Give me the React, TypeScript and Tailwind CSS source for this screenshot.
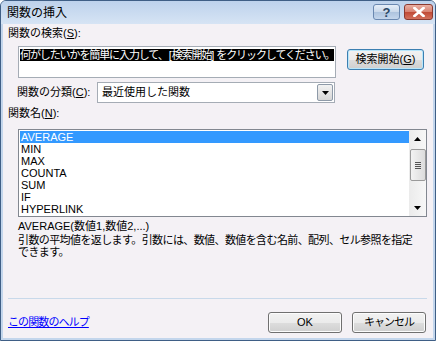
const items = ["AVERAGE", "MIN", "MAX", "COUNTA", "SUM", "IF", "HYPERLINK"];

const font = { fontFamily: '"Liberation Sans", "Noto Sans CJK JP", sans-serif' };

const Triangle = ({ up = false }: { up?: boolean }) => (
  <svg width="7" height="4" viewBox="0 0 7 4">
    <path d={up ? "M0 4 L3.5 0 L7 4 Z" : "M0 0 L7 0 L3.5 4 Z"} fill="#000" />
  </svg>
);

const WinButton = ({
  children,
  primary = false,
  className = "",
}: {
  children: React.ReactNode;
  primary?: boolean;
  className?: string;
}) => (
  <div
    className={`flex items-center justify-center rounded-[3px] border text-[11px] text-black ${
      primary
        ? "border-[#3c7fb1] shadow-[inset_0_0_0_1px_#b7e6fb]"
        : "border-[#707070] shadow-[inset_0_0_0_1px_#fcfcfc]"
    } bg-[linear-gradient(to_bottom,#f2f2f2_0%,#ebebeb_50%,#dddddd_51%,#cfcfcf_100%)] ${className}`}
  >
    {children}
  </div>
);

export default function App() {
  return (
    <div
      className="w-[436px] h-[341px] flex flex-col border border-[#3f5f86] rounded-t-[6px] overflow-hidden bg-[#c3d6ec]"
      style={font}
    >
      {/* title bar */}
      <div className="h-[23px] flex items-start bg-[linear-gradient(to_bottom,#bdd2ec,#d6e4f4)] pl-[6px] pr-[2px]">
        <span className="mt-[5px] text-[12px] leading-[14px] text-black">関数の挿入</span>
        <div className="ml-auto mt-[3px] flex gap-[4px]">
          <div className="w-[27px] h-[16px] rounded-[3px] border border-[#6a88b0] bg-[linear-gradient(to_bottom,#e6eef8_0%,#c9d8ea_50%,#adc3de_51%,#c4d6ec_100%)] flex items-center justify-center text-[13px] font-bold leading-none text-[#2c4766]">
            ?
          </div>
          <div className="w-[29px] h-[16px] rounded-[3px] border border-[#8b3a30] bg-[linear-gradient(to_bottom,#eab0a4_0%,#d7806f_50%,#c04a36_51%,#d2705c_100%)] flex items-center justify-center">
            <svg width="12" height="10" viewBox="0 0 12 10">
              <path d="M1.5 1 L10.5 9 M10.5 1 L1.5 9" stroke="#fff" strokeWidth="2.6" strokeLinecap="square" />
            </svg>
          </div>
        </div>
      </div>

      {/* body */}
      <div className="flex-1 flex flex-col mx-[2px] mb-[2px] bg-[#f4f1f5] text-[11px] leading-[13px] text-black">
        <div className="mt-[3px] ml-[5px]">
          関数の検索(<span className="underline">S</span>):
        </div>

        <div className="flex items-start mt-[6px]">
          <div className="ml-[15px] w-[318px] h-[32px] border border-[#a5acb5] bg-white px-[1px] pt-[2px]">
            <span className="bg-black text-white tracking-[-1.1px] whitespace-nowrap">
              何がしたいかを簡単に入力して、<span className="tracking-normal pl-[1px]">[</span>検索開始
              <span className="tracking-normal">]</span> をクリックしてください。
            </span>
          </div>
          <WinButton primary className="ml-[11px] mt-[3px] w-[77px] h-[21px]">
            検索開始(<span className="underline">G</span>)
          </WinButton>
        </div>

        <div className="flex items-center mt-[4px]">
          <span className="ml-[14px] w-[80px]">
            関数の分類(<span className="underline">C</span>):
          </span>
          <div className="w-[238px] h-[21px] border border-[#a5acb5] bg-white flex items-center">
            <span className="ml-[4px]">最近使用した関数</span>
            <div className="ml-auto mr-[1px] w-[16px] h-[17px] rounded-[2px] border border-[#8e9aa8] bg-[linear-gradient(to_bottom,#f2f2f2,#d6d6d6)] flex items-center justify-center">
              <Triangle />
            </div>
          </div>
        </div>

        <div className="mt-[4px] ml-[5px]">
          関数名(<span className="underline">N</span>):
        </div>

        <div className="mt-[9px] ml-[15px] w-[409px] h-[88px] border border-[#828790] bg-white flex">
          <div className="flex-1 pt-[1px] pl-[1px]">
            {items.map((it, i) => (
              <div
                key={it}
                className={`h-[12px] leading-[12px] pl-[1px] ${i === 0 ? "bg-[#3399ff] text-white" : ""}`}
              >
                {it}
              </div>
            ))}
          </div>
          <div className="w-[17px] flex flex-col items-center bg-[linear-gradient(to_right,#ebebeb,#f7f7f7)]">
            <div className="h-[17px] flex items-center justify-center">
              <Triangle up />
            </div>
            <div className="mt-[2px] w-[16px] h-[32px] rounded-[2px] border border-[#9a9a9a] bg-[linear-gradient(to_right,#f3f3f3,#dcdcdc)] flex flex-col items-center justify-center gap-[1px]">
              <div className="w-[6px] h-[1px] bg-[#555]" />
              <div className="w-[6px] h-[1px] bg-[#555]" />
              <div className="w-[6px] h-[1px] bg-[#555]" />
              <div className="w-[6px] h-[1px] bg-[#555]" />
            </div>
            <div className="mt-auto h-[17px] flex items-center justify-center">
              <Triangle />
            </div>
          </div>
        </div>

        <div className="mt-[3px] ml-[15px]">AVERAGE(数値1,数値2,...)</div>
        <div className="mt-[1px] ml-[15px] w-[400px] leading-[12px] tracking-[-0.6px]">
          引数の平均値を返します。引数には、数値、数値を含む名前、配列、セル参照を指定できます。
        </div>

        <div className="mt-auto ml-[5px] w-[419px] h-[1px] bg-[#c8d9ea]" />

        <div className="flex items-center mt-[13px] mb-[5px] pr-[7px]">
          <span className="ml-[5px] text-[#0000ff] underline tracking-[-0.9px]">この関数のヘルプ</span>
          <WinButton className="ml-auto w-[74px] h-[21px]">OK</WinButton>
          <WinButton className="ml-[10px] w-[74px] h-[21px] tracking-[-1px]">キャンセル</WinButton>
        </div>
      </div>
    </div>
  );
}
